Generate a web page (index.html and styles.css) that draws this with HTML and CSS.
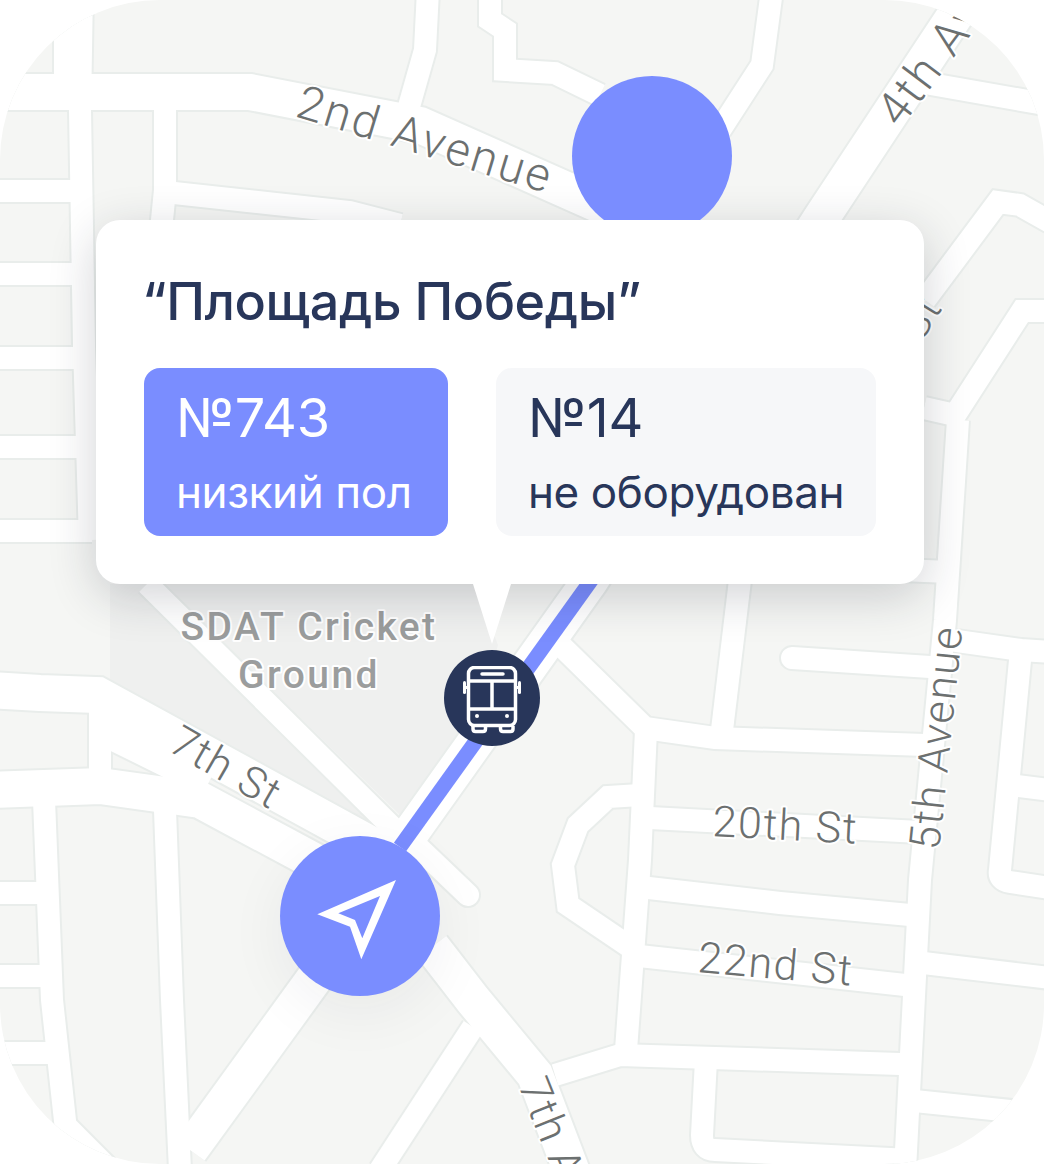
FILE: index.html
```
<!DOCTYPE html>
<html lang="ru">
<head>
<meta charset="utf-8">
<title>Остановка</title>
<link rel="stylesheet" href="styles.css">
</head>
<body>
<main class="screen">
  <svg class="map" viewBox="0 0 1044 1164" width="1044" height="1164">
    <rect class="land" width="1044" height="1164"/>
    <polygon class="park" points="110,584 110,700 395,840 147,584"/>
    <polygon class="park" points="163,584 402,817 480,705 498,645 474,584"/>
    <defs>
      <g id="wide">
        <path d="M-10,92 L250,92 L420,125 L600,205 L660,235"/>
        <path d="M395,855 L590,581 L820,220 L985,-30"/>
        <path d="M432,947 L473,1000 L535,1075 L575,1180"/>
        <path d="M335,950 L190,1150"/>
        <path d="M72,-10 L72,90"/>
        <path d="M-10,690 L40,693 L98,695 L390,855"/>
        <path d="M105,728 L210,780"/>
        <path d="M-10,790 L100,786 L200,800 L340,875"/>
        <path d="M60,1130 L120,1190"/>
      </g>
      <g id="narrow">
        <path d="M82,-10 L80,110 L84,345 L90,540"/>
        <path d="M-10,191 L80,191"/>
        <path d="M-10,274 L84,274"/>
        <path d="M-10,358 L84,358"/>
        <path d="M-10,447 L90,447"/>
        <path d="M-10,531 L92,531"/>
        <path d="M165,100 L165,190 L160,240"/>
        <path d="M165,192 L350,212 L400,225"/>
        <path d="M428,-10 L425,50 L408,110"/>
        <path d="M490,-10 L490,20 L505,30 L505,70 L555,73 L600,95"/>
        <path d="M772,-10 L762,65 L720,130"/>
        <path d="M925,83 L1050,105"/>
        <path d="M925,300 L998,202 L1020,205 L1050,222"/>
        <path d="M1050,311 L1022,311 L955,415 L924,408"/>
        <path d="M958,420 L945,620 L920,880 L905,1170"/>
        <path d="M900,570 L950,572"/>
        <path d="M147,584 L395,830"/>
        <path d="M545,630 L645,728 L715,738 L925,745"/>
        <path d="M646,730 L640,860 L626,1050"/>
        <path d="M740,580 L722,730"/>
        <path d="M950,640 L1021,650 L1050,652"/>
        <path d="M1021,650 L1000,870 Q998,880 1010,882 L1050,888"/>
        <path d="M1010,785 L1050,790"/>
        <path d="M650,818 L920,832"/>
        <path d="M640,887 L780,903 L910,915"/>
        <path d="M630,955 L905,985"/>
        <path d="M915,962 L1050,978"/>
        <path d="M555,1075 L620,1055 L900,1064"/>
        <path d="M706,1060 L702,1135 Q702,1150 715,1150 L910,1160"/>
        <path d="M905,1100 L1050,1115"/>
        <path d="M640,795 L608,797 L578,825 L563,865 L568,905 L630,947"/>
        <path d="M473,1027 L380,1170"/>
        <path d="M100,690 L100,790"/>
        <path d="M44,800 L52,1000 L66,1130"/>
        <path d="M165,810 L172,1000 L180,1170"/>
        <path d="M-10,893 L50,893"/>
        <path d="M-10,976 L55,976"/>
        <path d="M-10,1053 L60,1053"/>
      </g>
      <g id="stubs">
        <path d="M400,830 L468,895"/>
        <path d="M792,658 L930,667"/>
      </g>
    </defs>
    <use href="#wide" class="edge edge-wide"/>
    <use href="#narrow" class="edge edge-narrow"/>
    <use href="#stubs" class="edge edge-stub"/>
    <use href="#wide" class="road road-wide"/>
    <use href="#narrow" class="road road-narrow"/>
    <use href="#stubs" class="road road-stub"/>
    <path class="route" d="M400,847 L600,568"/>
    <text class="label label-large" x="294" y="116" transform="rotate(17 294 116)">2nd Avenue</text>
    <text class="label label-large" x="900" y="129" transform="rotate(-53 900 129)">4th Ave</text>
    <text class="label" x="921" y="343" transform="rotate(-58 921 343)">St</text>
    <text class="label" x="167" y="750" transform="rotate(30 167 750)">7th St</text>
    <text class="label" x="712" y="836" transform="rotate(3 712 836)">20th St</text>
    <text class="label" x="697" y="972" transform="rotate(5 697 972)">22nd St</text>
    <text class="label" x="939" y="851" transform="rotate(-84 939 851)">5th Avenue</text>
    <text class="label" x="518" y="1085" transform="rotate(68 518 1085)">7th Avenue</text>
    <text class="label label-place" x="309" y="640">SDAT Cricket</text>
    <text class="label label-place" x="309" y="688">Ground</text>
  </svg>

  <section class="card">
    <h1 class="card-title">“Площадь Победы”</h1>
    <div class="chips">
      <div class="chip chip-active">
        <div class="chip-number">№743</div>
        <div class="chip-note">низкий пол</div>
      </div>
      <div class="chip">
        <div class="chip-number">№14</div>
        <div class="chip-note">не оборудован</div>
      </div>
    </div>
  </section>

  <div class="stop-dot"></div>

  <div class="bus-pin">
    <svg class="bus-icon" viewBox="0 0 60 68" width="60" height="68">
      <rect class="bus-line" x="6.5" y="1.5" width="47" height="58" rx="6"/>
      <path class="bus-line" d="M6.5 15H53.500M30 15V43M6.500 43H53.500"/>
      <path class="bus-line bus-round" d="M20 8H41"/>
      <rect class="bus-white" x="1" y="15" width="3" height="13" rx="1.5"/>
      <rect class="bus-white" x="56" y="15" width="3" height="13" rx="1.5"/>
      <path class="bus-white" d="M3 20H7V23H3ZM53 20H57V23H53Z"/>
      <circle class="bus-white" cx="15" cy="50" r="2"/>
      <circle class="bus-white" cx="45" cy="50" r="2"/>
      <path class="bus-line" d="M11 60V63Q11 65.500 13.500 65.500H21Q23.500 65.500 23.500 63V60M38.500 60V63Q38.500 65.500 41 65.500H48.500Q51 65.500 51 63V60"/>
    </svg>
  </div>

  <div class="nav-pin">
    <svg class="nav-icon" viewBox="0 0 80 80" width="80" height="80">
      <path fill-rule="evenodd" d="M37.300 34.300L116 0L81.300 79.300L70 46.700ZM58.300 33.300L100 16L82.300 58.300L75 40Z" transform="translate(-40 4)"/>
    </svg>
  </div>
</main>
</body>
</html>
```

FILE: styles.css
```
html, body {
  margin: 0;
  padding: 0;
  background: #fff;
}

.screen {
  position: relative;
  width: 1044px;
  height: 1164px;
  overflow: hidden;
  border-radius: 160px;
  background: #fff;
  font-family: Inter, "Noto Sans", sans-serif;
}

.map {
  position: absolute;
  inset: 0;
  display: block;
}

.land { fill: #f5f6f4; }
.park { fill: #eff0ef; }

.edge, .road {
  fill: none;
  stroke-linejoin: miter;
}
.edge { stroke: #e9edeb; }
.road { stroke: #fff; }
.edge-wide { stroke-width: 40px; }
.road-wide { stroke-width: 36px; }
.edge-narrow { stroke-width: 26px; }
.road-narrow { stroke-width: 22px; }
.edge-stub { stroke-width: 26px; stroke-linecap: round; }
.road-stub { stroke-width: 22px; stroke-linecap: round; }

.route {
  fill: none;
  stroke: #7a8dff;
  stroke-width: 15px;
}

.label {
  font-family: Roboto, "Noto Sans", sans-serif;
  font-size: 43px;
  font-weight: 300;
  letter-spacing: 1.5px;
  fill: #6c7070;
  stroke: #fff;
  stroke-width: 4px;
  paint-order: stroke;
  stroke-linejoin: round;
}

.label-large {
  font-size: 47px;
  letter-spacing: 2.5px;
}

.label-place {
  font-size: 39px;
  font-weight: 500;
  letter-spacing: 2.4px;
  fill: #9b9d9d;
  text-anchor: middle;
}

.stop-dot {
  position: absolute;
  left: 572px;
  top: 76px;
  width: 160px;
  height: 160px;
  border-radius: 50%;
  background: #7a8dff;
  clip-path: inset(0 0 16px 0);
}

.card {
  position: absolute;
  left: 96px;
  top: 220px;
  width: 828px;
  height: 364px;
  box-sizing: border-box;
  padding: 50px 48px 48px;
  border-radius: 24px;
  background: #fff;
  box-shadow: 0 12px 48px rgba(30, 35, 50, 0.2);
}

.card::after {
  content: "";
  position: absolute;
  left: 377px;
  top: 100%;
  width: 38px;
  height: 60px;
  background: #fff;
  clip-path: polygon(0 0, 100% 0, 50% 100%);
}

.card-title {
  margin: 0 0 34px -2px;
  font-size: 52px;
  line-height: 64px;
  font-weight: 500;
  letter-spacing: -0.4px;
  color: #28365a;
  white-space: nowrap;
}

.chips {
  display: grid;
  grid-template-columns: 304px 380px;
  gap: 48px;
}

.chip {
  box-sizing: border-box;
  height: 168px;
  padding: 18px 32px 0;
  border-radius: 16px;
  background: #f6f7f9;
  color: #28365a;
}

.chip-active {
  background: #7a8dff;
  color: #fff;
}

.chip-number {
  font-size: 54px;
  line-height: 64px;
  font-weight: 400;
  letter-spacing: -0.2px;
}

.chip-note {
  margin-top: 16px;
  font-size: 44px;
  line-height: 52px;
  font-weight: 400;
  letter-spacing: -0.4px;
  white-space: nowrap;
}

.bus-pin {
  position: absolute;
  left: 444px;
  top: 650px;
  width: 96px;
  height: 96px;
  display: flex;
  align-items: center;
  justify-content: center;
  border-radius: 50%;
  background: #28365a;
}

.bus-icon {
  margin-top: 4px;
}

.bus-line {
  fill: none;
  stroke: #fff;
  stroke-width: 3.5px;
}
.bus-round {
  stroke-linecap: round;
}
.bus-white { fill: #fff; }

.nav-pin {
  position: absolute;
  left: 280px;
  top: 836px;
  width: 160px;
  height: 160px;
  display: flex;
  align-items: center;
  justify-content: center;
  border-radius: 50%;
  background: #7a8dff;
  box-shadow: 0 16px 60px rgba(30, 35, 50, 0.06);
}

.nav-icon {
  overflow: visible;
  fill: #fff;
}
```
